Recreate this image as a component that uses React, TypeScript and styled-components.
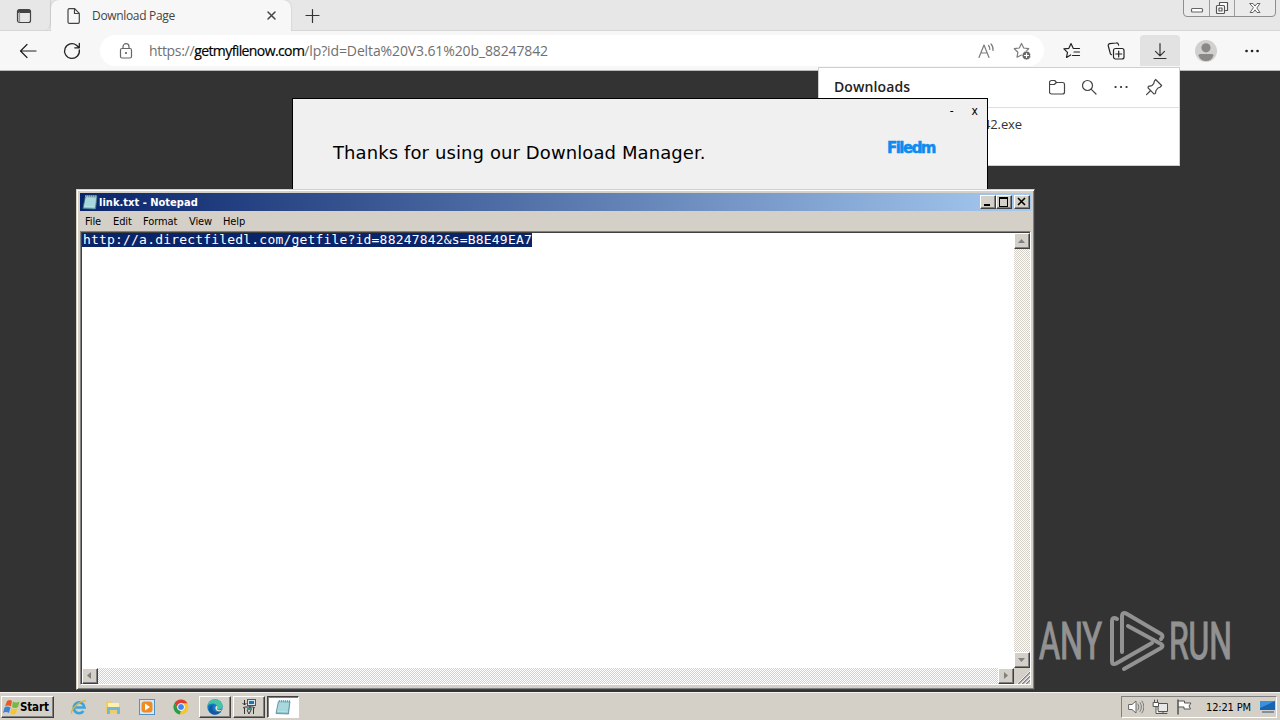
import React from "react"
import styled, { createGlobalStyle } from "styled-components"

const uiFont = `"Open Sans", "Noto Sans", sans-serif`
const classicFont = `"DejaVu Sans Condensed", "DejaVu Sans", sans-serif`

const GlobalStyle = createGlobalStyle`
  * {
    box-sizing: border-box;
  }

  body {
    margin: 0;
    overflow: hidden;
    background: #333;
  }

  svg {
    display: block;
    flex: none;
  }
`

const Desktop = styled.main`
  position: relative;
  width: 1280px;
  height: 720px;
  overflow: hidden;
  display: flex;
  flex-direction: column;
  background: #333;
`

/* Browser */

const TabStrip = styled.div`
  height: 31px;
  display: flex;
  background: #e7e7e7;
  box-shadow: inset 0 -1px #d6d6d6;
`

const TabActions = styled.div`
  width: 51px;
  padding: 8px 0 0 16px;
  border-bottom-right-radius: 8px;
  border-right: 1px solid #d2d2d2;
`

const Tab = styled.div`
  width: 240px;
  height: 31px;
  display: flex;
  align-items: center;
  padding: 0 13px 0 15px;
  background: #f7f7f7;
  border-radius: 8px 8px 0 0;
  box-shadow: 0 0 2px #bbb;
  clip-path: inset(0 -3px 0 -3px);
`

const TabTitle = styled.span`
  flex: 1;
  margin-left: 10px;
  font: 12px/16px ${uiFont};
  letter-spacing: -0.33px;
  color: #444;
`

const NewTab = styled.div`
  padding: 8px 0 0 13px;
`

const CaptionGroup = styled.div`
  margin: -1px 4px 0 auto;
  width: 93px;
  height: 18px;
  display: grid;
  grid-template-columns: 25px 25px 1fr;
  border: 1px solid #8e8e8e;
  border-radius: 0 0 4px 4px;
  background: #ebebeb;
`

const CaptionCell = styled.div`
  display: flex;
  align-items: center;
  justify-content: center;

  & + & {
    border-left: 1px solid #9c9c9c;
  }
`

const Toolbar = styled.div`
  height: 40px;
  display: flex;
  align-items: center;
  gap: 4px;
  padding: 0 8px;
  background: #f7f7f7;
  border-bottom: 1px solid #b9b9b9;
`

const ToolButton = styled.div<{ $width?: number; $active?: boolean }>`
  width: ${(props) => props.$width ?? 40}px;
  height: 31px;
  display: flex;
  align-items: center;
  justify-content: center;
  border-radius: 4px 4px 0 0;
  background: ${(props) => (props.$active ? "#e2e2e2" : "transparent")};
`

const AddressBar = styled.div`
  flex: 1;
  height: 31px;
  margin: 0 4px;
  display: flex;
  align-items: center;
  padding: 0 13px 0 18px;
  background: #fff;
  border-radius: 16px;
`

const Url = styled.span`
  flex: 1;
  margin-left: 15px;
  padding-top: 1px;
  font: 14px/20px ${uiFont};
  letter-spacing: -0.12px;
  color: #707070;
  white-space: nowrap;
`

const Scheme = styled.span`
  letter-spacing: -0.32px;
`

const Host = styled.span`
  letter-spacing: -0.6px;
  color: #000;
  -webkit-text-stroke: 0.2px #000;
`

const AddressIcons = styled.div`
  display: flex;
  gap: 18px;
`

/* Downloads flyout */

const Flyout = styled.section`
  position: absolute;
  left: 818px;
  top: 67px;
  width: 362px;
  height: 99px;
  background: #fff;
  border: 1px solid #cfcfcf;
  font-family: ${uiFont};
`

const FlyoutHeader = styled.header`
  height: 40px;
  display: flex;
  align-items: center;
  justify-content: space-between;
  padding: 0 16px 2px 15px;
  border-bottom: 1px solid #dedede;
`

const FlyoutTitle = styled.h2`
  margin: 0;
  font-size: 14px;
  line-height: 20px;
  font-weight: 600;
  letter-spacing: 0.1px;
  color: #222;
`

const FlyoutIcons = styled.div`
  display: flex;
  align-items: center;
  gap: 14px;
`

const FileName = styled.p`
  margin: 6px 0 0 100px;
  width: 103px;
  text-align: right;
  font-size: 13px;
  line-height: 20px;
  letter-spacing: -0.1px;
  color: #333;
  white-space: nowrap;
`

/* Download manager dialog */

const Dialog = styled.section`
  position: absolute;
  left: 292px;
  top: 98px;
  width: 696px;
  height: 120px;
  background: #f0f0f0;
  border: 1px solid #000;
  font-family: "DejaVu Sans", sans-serif;
`

const DialogControls = styled.div`
  display: flex;
  justify-content: flex-end;
  gap: 18px;
  padding: 5px 9px 0 0;
  font: 12px/15px ${classicFont};
  color: #000;
`

const DialogBody = styled.div`
  display: flex;
  justify-content: space-between;
  padding: 18px 52px 0 40px;
`

const Greeting = styled.h1`
  margin: 5px 0 0;
  font-size: 18px;
  line-height: 22px;
  font-weight: 400;
  letter-spacing: 0.1px;
  color: #000;
`

const Brand = styled.span`
  font: 700 15px/23px "DejaVu Sans", sans-serif;
  letter-spacing: -1.5px;
  color: #0c8cf0;
  -webkit-text-stroke: 0.5px #0c8cf0;
`

/* Notepad */

const Notepad = styled.section`
  position: absolute;
  left: 76px;
  top: 189px;
  width: 959px;
  height: 501px;
  padding: 2px;
  display: flex;
  flex-direction: column;
  background: #d4d0c8;
  border: 1px solid;
  border-color: #d4d0c8 #404040 #404040 #d4d0c8;
  box-shadow: inset 1px 1px #fff, inset -1px -1px #808080;
  font-family: ${classicFont};
`

const TitleBar = styled.header`
  height: 18px;
  margin: 1px 1px 0;
  display: flex;
  align-items: center;
  padding: 0 1px 0 2px;
  background: linear-gradient(90deg, #0a246a, #a6caf0);
`

const WindowTitle = styled.h2`
  flex: 1;
  margin: 0 0 0 1px;
  padding-top: 1px;
  font-size: 11px;
  line-height: 17px;
  font-weight: 700;
  letter-spacing: 0.02px;
  color: #fff;
`

const raised = `
  background: #d4d0c8;
  border: 1px solid;
  border-color: #fff #404040 #404040 #fff;
  box-shadow: inset -1px -1px #808080;
`

const TitleButton = styled.div<{ $gap?: number }>`
  ${raised}
  width: 16px;
  height: 14px;
  margin-left: ${(props) => props.$gap ?? 0}px;
  display: flex;
  align-items: center;
  justify-content: center;
`

const MenuBar = styled.nav`
  height: 20px;
  display: flex;
  align-items: center;
  padding-left: 6px;
  font-size: 11px;
  color: #000;
`

const MenuItem = styled.span<{ $width: number }>`
  width: ${(props) => props.$width}px;
  letter-spacing: -0.1px;
`

const Editor = styled.div`
  width: 951px;
  height: 454px;
  margin-left: 1px;
  display: grid;
  grid-template-columns: 1fr 16px;
  grid-template-rows: 1fr 16px;
  background: #fff;
  border: 1px solid;
  border-color: #808080 #fff #fff #808080;
  box-shadow: inset 1px 1px #404040;
  padding: 1px 0 0 1px;
`

const Selected = styled.span`
  width: 450px;
  height: 14px;
  padding-left: 1px;
  background: #0a246a;
  color: #fff;
  font: 13px/14px "DejaVu Sans Mono", monospace;
  letter-spacing: 0.19px;
  white-space: nowrap;
`

const ScrollBar = styled.div<{ $vertical?: boolean }>`
  display: flex;
  flex-direction: ${(props) => (props.$vertical ? "column" : "row")};
  justify-content: space-between;
  background: repeating-conic-gradient(#d4d0c8 0 25%, #fff 0 50%) 0 0 / 2px 2px;
`

const ScrollButton = styled.div`
  ${raised}
  width: 16px;
  height: 16px;
  display: flex;
  align-items: center;
  justify-content: center;
`

const Grip = styled.div`
  background: #d4d0c8;
`

/* Watermark */

const Watermark = styled.div`
  position: absolute;
  left: 1036px;
  top: 605px;
  opacity: 0.5;
`

/* Taskbar */

const Taskbar = styled.footer`
  height: 28px;
  margin-top: auto;
  display: flex;
  align-items: center;
  padding: 1px 3px 0 1px;
  background: #d4d0c8;
  border-top: 1px solid #f4f2ee;
  font-family: ${classicFont};
`

const StartButton = styled.div`
  ${raised}
  width: 53px;
  height: 22px;
  display: flex;
  align-items: center;
  padding-left: 1px;
  font-size: 11.5px;
  font-weight: 700;
  letter-spacing: -0.15px;
  color: #000;
`

const QuickLaunch = styled.div`
  display: flex;
  gap: 18px;
  margin: 0 10px 0 17px;
`

const TaskButton = styled.div<{ $pressed?: boolean }>`
  ${raised}
  width: 32px;
  height: 22px;
  margin-right: 2px;
  display: flex;
  align-items: center;
  justify-content: center;
  ${(props) =>
    props.$pressed &&
    `
    background: #fff;
    border-color: #404040 #fff #fff #404040;
    box-shadow: inset 1px 1px #808080;
  `}
`

const Tray = styled.div`
  width: 156px;
  height: 22px;
  margin-left: auto;
  display: flex;
  align-items: center;
  padding-left: 6px;
  border: 1px solid;
  border-color: #808080 #fff #fff #808080;
  font-size: 11px;
  color: #000;
`

const TrayIcons = styled.div`
  display: flex;
  gap: 8px;
`

const Clock = styled.span`
  width: 53px;
  margin-left: 14px;
  letter-spacing: -0.15px;
  white-space: nowrap;
`

interface IconProps {
  size?: number
  color?: string
  width?: number
  children: React.ReactNode
}

const Icon = ({ size = 16, color = "#222", width = 1.2, children }: IconProps) => (
  <svg width={size} height={size} viewBox={`0 0 ${size} ${size}`} fill="none" stroke={color} strokeWidth={width} strokeLinecap="round" strokeLinejoin="round">
    {children}
  </svg>
)

const NotepadIcon = () => (
  <svg width="16" height="16" viewBox="0 0 16 16">
    <path d="M3.5 2 15 2.5 13.5 15 1 14.5Z" fill="#82bfca" stroke="#477987" strokeWidth=".7" />
    <path d="M4 3.5 13.8 4 12.6 13.5 2 13Z" fill="#b5e1e5" />
    <path d="M4 5h9.5M3.8 7h9.4M3.5 9H13M3.2 11h9.5" stroke="#8abfc9" strokeWidth=".6" />
    <path d="M4 1v2M6 1v2M8 1v2M10 1v2M12 1v2M14 1v2" stroke="#d9edf0" />
    <path d="M4 2h11" stroke="#48666d" strokeDasharray="1 1" />
  </svg>
)

const Arrow = ({ points }: { points: string }) => (
  <svg width="8" height="8" viewBox="0 0 8 8">
    <polygon points={points} fill="#808080" />
  </svg>
)

const menuItems = [
  { label: "File", width: 28 },
  { label: "Edit", width: 30 },
  { label: "Format", width: 46 },
  { label: "View", width: 34 },
  { label: "Help", width: 30 },
]

const Browser = () => (
  <>
    <TabStrip>
      <TabActions>
        <Icon color="#444">
          <rect x="1.5" y="1.5" width="13" height="13" rx="2" />
          <path d="M2.5 2.7h11M2.5 4h11" strokeWidth="2" />
          <path d="M3.3 5v8.5" strokeWidth="1.6" stroke="#999" />
        </Icon>
      </TabActions>
      <Tab>
        <Icon color="#444">
          <path d="M3.5.7h5.2l4.6 4.6v8.6a1.5 1.5 0 0 1-1.5 1.5H3.5A1.5 1.5 0 0 1 2 13.9V2.2A1.5 1.5 0 0 1 3.5.7ZM8.500 1v4.500h4.500" />
        </Icon>
        <TabTitle>Download Page</TabTitle>
        <Icon size={13} color="#444" width={1.5}>
          <path d="m3 3 7 7M10 3l-7 7" />
        </Icon>
      </Tab>
      <NewTab>
        <Icon color="#333">
          <path d="M8.5 1.5v13M2 7.5h13" />
        </Icon>
      </NewTab>
      <CaptionGroup>
        <CaptionCell>
          <Icon size={14} color="#666">
            <rect x="1.5" y="7.5" width="11" height="3.5" rx="1" fill="#fff" />
          </Icon>
        </CaptionCell>
        <CaptionCell>
          <Icon size={14} color="#555">
            <path d="M4.5 3.5v-2h8v8h-2" fill="#fff" />
            <rect x="1.5" y="4.5" width="8" height="8" rx="1" fill="#fff" />
            <rect x="4" y="7" width="3" height="3" />
          </Icon>
        </CaptionCell>
        <CaptionCell>
          <Icon size={14} color="#666" width={1}>
            <path d="M2 2.5h3l2 2.6 2-2.6h3L8.800 7l3.200 4.500H9L7 8.900l-2 2.600H2L5.200 7Z" fill="#fff" />
          </Icon>
        </CaptionCell>
      </CaptionGroup>
    </TabStrip>
    <Toolbar>
      <ToolButton>
        <Icon size={18}>
          <path d="M17 9H1.5M8 2.5 1.5 9 8 15.5" />
        </Icon>
      </ToolButton>
      <ToolButton>
        <Icon size={18} width={1.3}>
          <path d="M16.3 8A7.4 7.4 0 1 1 13.5 3.200L16 5.500M16.300 1.500v4.300h-4.500" />
        </Icon>
      </ToolButton>
      <AddressBar>
        <Icon color="#666">
          <rect x="2.5" y="5.5" width="11" height="9.500" rx="1.5" />
          <path d="M5 5.5V3.7a3 3 0 0 1 6 0v1.8" />
          <circle cx="8" cy="10" r=".5" fill="#666" />
        </Icon>
        <Url>
          <Scheme>https://</Scheme>
          <Host>getmyfilenow.com</Host>/lp?id=Delta%20V3.61%20b_88247842
        </Url>
        <AddressIcons>
          <Icon size={18} color="#7c7c7c">
            <path d="M2 15.5 7 3l5 12.500M3.800 11h6.400M11.500 3.500a5 5 0 0 1 1.300 4M14 2a8 8 0 0 1 2 6.500" />
          </Icon>
          <Icon size={18} color="#7c7c7c">
            <path d="M8.5 1.5 10.700 6l5 .7-3.700 3.500.9 5L8.500 13 4 15.200l.9-5L1.300 6.700l5-.7Z" />
            <circle cx="13.500" cy="13.500" r="4.400" fill="#666" stroke="#fff" strokeWidth=".7" />
            <path d="M13.500 11.500v4M11.500 13.500h4" stroke="#fff" />
          </Icon>
        </AddressIcons>
      </AddressBar>
      <ToolButton>
        <Icon size={18}>
          <path d="M10.200 6.200 8 1.500 5.900 6.300l-5 .6 3.600 3.500-1 5L7.700 13M10.500 6.500h6M11 10h5.500M9.500 13.500h7" />
        </Icon>
      </ToolButton>
      <ToolButton>
        <Icon size={18}>
          <path d="m4.500 12.700-1-.6L1.300 4a2 2 0 0 1 1.400-2.400L9 1a2 2 0 0 1 2.400 1.400l.2.800" />
          <rect x="6.500" y="6.500" width="10.500" height="10.500" rx="2" />
          <path d="M11.700 9v6M8.700 12h6" />
        </Icon>
      </ToolButton>
      <ToolButton $active>
        <Icon size={18} color="#333">
          <path d="M9 1.500v12M4.500 9.300 9 13.800l4.500-4.500M3 16.500h12" />
        </Icon>
      </ToolButton>
      <ToolButton $width={44}>
        <svg width="22" height="22" viewBox="0 0 22 22">
          <circle cx="11" cy="11" r="11" fill="#d2d0ce" />
          <circle cx="11" cy="7.800" r="4.600" fill="#8a8886" />
          <path d="M3.500 15.500q0-1.500 1.500-1.500h12q1.500 0 1.500 1.500-2 5.500-7.500 5.500T3.500 15.500" fill="#8a8886" />
        </svg>
      </ToolButton>
      <ToolButton>
        <Icon>
          <path d="M2.500 8h.1M8 8h.1M13.500 8h.1" strokeWidth="2.600" />
        </Icon>
      </ToolButton>
    </Toolbar>
  </>
)

const DownloadsFlyout = () => (
  <Flyout>
    <FlyoutHeader>
      <FlyoutTitle>Downloads</FlyoutTitle>
      <FlyoutIcons>
        <Icon size={18} color="#444">
          <path d="M.5 4.500a2 2 0 0 1 2-2h3.200L7.500 4.500h6a2 2 0 0 1 2 2v7.500a2 2 0 0 1-2 2h-11a2 2 0 0 1-2-2ZM.5 6.500h4.700l2.300-2" />
        </Icon>
        <Icon size={18} color="#444">
          <circle cx="6.500" cy="7.500" r="5" />
          <path d="m10.300 11.300 4.700 4.700" />
        </Icon>
        <Icon size={18} color="#333">
          <path d="M2.500 9h.1M8 9h.1M13.500 9h.1" strokeWidth="2.200" />
        </Icon>
        <Icon size={18} color="#444">
          <path d="m10.600 1.500 6 6-1.500 1.700-2.100.8-2 2.500-.6 3-1.500.3L3 9.900l.4-1.500 3.500-.7 1.800-2 .7-2.600ZM5.700 12.500 1.500 16.700" />
        </Icon>
      </FlyoutIcons>
    </FlyoutHeader>
    <FileName>b_88247842.exe</FileName>
  </Flyout>
)

const ManagerDialog = () => (
  <Dialog>
    <DialogControls>
      <span>-</span>
      <span>x</span>
    </DialogControls>
    <DialogBody>
      <Greeting>Thanks for using our Download Manager.</Greeting>
      <Brand>Filedm</Brand>
    </DialogBody>
  </Dialog>
)

const NotepadWindow = () => (
  <Notepad>
    <TitleBar>
      <NotepadIcon />
      <WindowTitle>link.txt - Notepad</WindowTitle>
      <TitleButton>
        <svg width="12" height="10">
          <path d="M2 8h6" stroke="#000" strokeWidth="2" />
        </svg>
      </TitleButton>
      <TitleButton>
        <svg width="12" height="10" shapeRendering="crispEdges">
          <path d="M1.5 1v8.500h8V1" fill="none" stroke="#000" />
          <path d="M1 1h9" stroke="#000" strokeWidth="2" />
        </svg>
      </TitleButton>
      <TitleButton $gap={2}>
        <svg width="12" height="10">
          <path d="m2 1 7 7M9 1 2 8" stroke="#000" strokeWidth="1.600" />
        </svg>
      </TitleButton>
    </TitleBar>
    <MenuBar>
      {menuItems.map((item) => (
        <MenuItem key={item.label} $width={item.width}>
          {item.label}
        </MenuItem>
      ))}
    </MenuBar>
    <Editor>
      <Selected>http://a.directfiledl.com/getfile?id=88247842&amp;s=B8E49EA7</Selected>
      <ScrollBar $vertical>
        <ScrollButton>
          <Arrow points="0,6 3.5,2 7,6" />
        </ScrollButton>
        <ScrollButton>
          <Arrow points="0,2 7,2 3.5,6" />
        </ScrollButton>
      </ScrollBar>
      <ScrollBar>
        <ScrollButton>
          <Arrow points="5,0 5,7 1,3.5" />
        </ScrollButton>
        <ScrollButton>
          <Arrow points="2,0 2,7 6,3.5" />
        </ScrollButton>
      </ScrollBar>
      <Grip>
        <svg width="16" height="16">
          <path d="M4 16 16 4M8 16l8-8M12 16l4-4" stroke="#808080" strokeWidth="1.5" />
          <path d="M3 16 16 3M7 16l9-9M11 16l5-5" stroke="#fff" strokeWidth=".8" />
        </svg>
      </Grip>
    </Editor>
  </Notepad>
)

const AnyRunMark = () => (
  <Watermark>
    <svg width="210" height="72" viewBox="0 0 210 72" fontFamily="Roboto, sans-serif" fontSize="51">
      <g fill="#f0f0f0" stroke="#f0f0f0" strokeWidth="1.2">
        <text x="3" y="54" textLength="63" lengthAdjust="spacingAndGlyphs">ANY</text>
        <text x="133" y="54" textLength="63" lengthAdjust="spacingAndGlyphs">RUN</text>
      </g>
      <g fill="none" stroke="#f0f0f0" strokeWidth="4" strokeLinejoin="round" strokeLinecap="round">
        <path d="M81 14q-5-3-5 3v39q0 5 5 2l35-20" />
        <path d="M86 47V12q0-6 5-3l34 20q3 2 0 5" />
        <path d="M92 21 125 39q3 2 0 4L88 64" />
      </g>
    </svg>
  </Watermark>
)

const StartBar = () => (
  <Taskbar>
    <StartButton>
      <svg width="17" height="17" viewBox="0 0 17 17">
        <path d="M4 2q3-2 5 0L8 7.500q-3-2-6 0Z" fill="#e65a28" />
        <path d="M10 2.500q3 2 6.500 0L15 8q-3 2-6 0Z" fill="#75b843" />
        <path d="M1.500 8.500q3-2 6 0L6 14q-3-2-6 0Z" fill="#3d83cf" />
        <path d="M8.500 9q3 2 6 0L13 14.500q-3 2-6 0Z" fill="#f5c534" />
      </svg>
      Start
    </StartButton>
    <QuickLaunch>
      <svg width="16" height="16" viewBox="0 0 16 16" fill="none">
        <path d="M4 8.500h9.500A5.400 5.400 0 1 0 12.500 12" stroke="#39a5df" strokeWidth="2.700" />
        <path d="M1 14.500C-2 12 9 1 15 2" stroke="#e5b52f" strokeWidth="1.400" />
      </svg>
      <svg width="16" height="16" viewBox="0 0 16 16">
        <path d="M1 2h5l1 2h7v10H1Z" fill="#edcd69" />
        <path d="M3 4h11v5H3Z" fill="#fff0ad" />
        <path d="M2 15V9q0-1 1-1h11q1 0 1 1v6h-3v-4H5v4Z" fill="#70b8de" />
      </svg>
      <svg width="16" height="16" viewBox="0 0 16 16">
        <rect x=".5" y=".5" width="15" height="15" fill="#d5e8f7" stroke="#4f92c9" />
        <rect x="2.500" y="2.500" width="11" height="11" rx="3" fill="#f18b20" />
        <path d="m6 4.500 5 3.500-5 3.500Z" fill="#fff" />
      </svg>
      <svg width="16" height="16" viewBox="0 0 16 16">
        <circle cx="8" cy="8" r="7.500" fill="#f7c52c" />
        <path d="M1.500 4.200A7.500 7.500 0 0 1 14.500 4.250H8L5 10Z" fill="#dc3d30" />
        <path d="M1.500 4.200 5 10l3 1.500-1.200 4A7.500 7.500 0 0 1 1.500 4.200" fill="#2a9d4c" />
        <circle cx="8" cy="8" r="3.500" fill="#4385ed" stroke="#fff" />
      </svg>
    </QuickLaunch>
    <TaskButton>
      <svg width="16" height="16" viewBox="0 0 16 16">
        <circle cx="8" cy="8" r="7.700" fill="#147bc4" />
        <path d="M.5 6.500C2-2 15-2 15.700 7c0 4.500-6 4-5.700 2C11 4 4 3 .5 6.500" fill="#45c3a4" />
        <path d="M6.500 6C3 10 8 15 14 12.500 10 17.500 2 16 2 10c0-3 2.500-4 4.500-4" fill="#14599d" />
        <path d="M9 7c2 0 1.500 2 1 3 1 1.500 3.500 1.500 5 .5-1 3.500-9 1.500-6-3.500" fill="#e4e2dc" />
      </svg>
    </TaskButton>
    <TaskButton>
      <svg width="16" height="16" viewBox="0 0 16 16">
        <rect x="6.500" y=".5" width="8" height="6" fill="#d7e5e8" stroke="#555" />
        <rect x="8" y="2" width="5" height="3" fill="#1679b4" />
        <path d="M3.500 1v5M1.500 4l2 2 2-2M2 9l2-1h8l2 1M3.500 9v6M12.500 9v6M6 11l2 4 2-4M9 7v2" stroke="#333" fill="none" />
        <path d="M6 9h5v2H6Z" fill="#358d9a" />
      </svg>
    </TaskButton>
    <TaskButton $pressed>
      <NotepadIcon />
    </TaskButton>
    <Tray>
      <TrayIcons>
        <Icon color="#666" width={1}>
          <path d="M1 5.500h3L8 2v12l-4-3.500H1Z" fill="#fff" />
          <path d="M10 5q2 3 0 6M12 3.500q3 4.500 0 9M14 2q4 6 0 12" strokeWidth=".8" />
        </Icon>
        <Icon color="#555" width={1}>
          <path d="M6.500 4.500h9v8h-9ZM11 12.500v2M7 14.500h8" fill="#e8e8e8" />
          <path d="M1.500 3.500h5v4h-5ZM2.500 1v2.500M5.500 1v2.500M4 7.500v7h2.500" fill="#fff" />
        </Icon>
        <Icon color="#555" width={1}>
          <path d="M2.500 2h6v2h6.500l-2 3 1.500 3H8V8H2.500" fill="#fff" />
          <path d="M2 1v14" strokeWidth="1.5" />
        </Icon>
      </TrayIcons>
      <Clock>12:21 PM</Clock>
      <svg width="17" height="16" viewBox="0 0 17 16">
        <path d="M1 2h15v9H1Z" fill="#1765b1" />
        <path d="M1 2h15L1 9Z" fill="#3b91dc" />
        <path d="M3 12.500h12v1H3Z" fill="#34526d" />
      </svg>
    </Tray>
  </Taskbar>
)

export default function App() {
  return (
    <>
      <GlobalStyle />
      <Desktop>
        <Browser />
        <DownloadsFlyout />
        <ManagerDialog />
        <NotepadWindow />
        <AnyRunMark />
        <StartBar />
      </Desktop>
    </>
  )
}
